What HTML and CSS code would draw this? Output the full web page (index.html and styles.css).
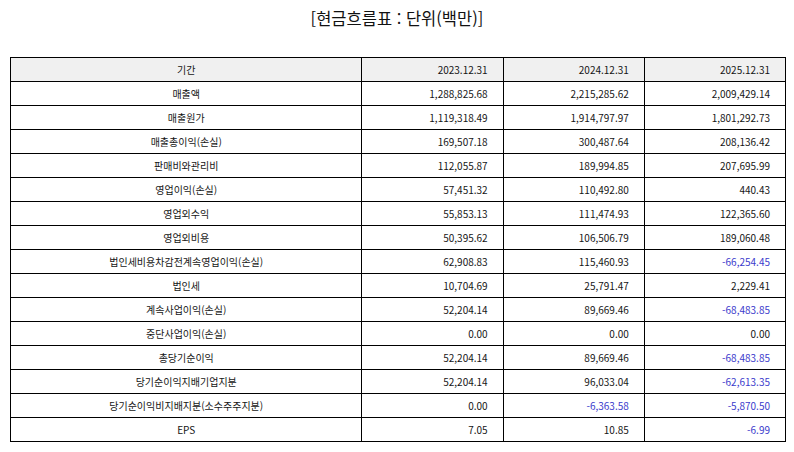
FILE: index.html
```html
<!DOCTYPE html>
<html lang="ko">
<head>
<meta charset="utf-8">
<link rel="stylesheet" href="styles.css">
</head>
<body>
<div class="page">
  <h1 class="title">[현금흐름표 : 단위(백만)]</h1>
  <table class="fin">
    <colgroup>
      <col class="c-label"><col class="c-num"><col class="c-num"><col class="c-num">
    </colgroup>
    <thead>
      <tr><th class="lbl">기간</th><th>2023.12.31</th><th>2024.12.31</th><th>2025.12.31</th></tr>
    </thead>
    <tbody>
      <tr><td class="lbl">매출액</td><td>1,288,825.68</td><td>2,215,285.62</td><td>2,009,429.14</td></tr>
      <tr><td class="lbl">매출원가</td><td>1,119,318.49</td><td>1,914,797.97</td><td>1,801,292.73</td></tr>
      <tr><td class="lbl">매출총이익(손실)</td><td>169,507.18</td><td>300,487.64</td><td>208,136.42</td></tr>
      <tr><td class="lbl">판매비와관리비</td><td>112,055.87</td><td>189,994.85</td><td>207,695.99</td></tr>
      <tr><td class="lbl">영업이익(손실)</td><td>57,451.32</td><td>110,492.80</td><td>440.43</td></tr>
      <tr><td class="lbl">영업외수익</td><td>55,853.13</td><td>111,474.93</td><td>122,365.60</td></tr>
      <tr><td class="lbl">영업외비용</td><td>50,395.62</td><td>106,506.79</td><td>189,060.48</td></tr>
      <tr><td class="lbl">법인세비용차감전계속영업이익(손실)</td><td>62,908.83</td><td>115,460.93</td><td class="neg">-66,254.45</td></tr>
      <tr><td class="lbl">법인세</td><td>10,704.69</td><td>25,791.47</td><td>2,229.41</td></tr>
      <tr><td class="lbl">계속사업이익(손실)</td><td>52,204.14</td><td>89,669.46</td><td class="neg">-68,483.85</td></tr>
      <tr><td class="lbl">중단사업이익(손실)</td><td>0.00</td><td>0.00</td><td>0.00</td></tr>
      <tr><td class="lbl">총당기순이익</td><td>52,204.14</td><td>89,669.46</td><td class="neg">-68,483.85</td></tr>
      <tr><td class="lbl">당기순이익지배기업지분</td><td>52,204.14</td><td>96,033.04</td><td class="neg">-62,613.35</td></tr>
      <tr><td class="lbl">당기순이익비지배지분(소수주주지분)</td><td>0.00</td><td class="neg">-6,363.58</td><td class="neg">-5,870.50</td></tr>
      <tr><td class="lbl">EPS</td><td>7.05</td><td>10.85</td><td class="neg">-6.99</td></tr>
    </tbody>
  </table>
</div>
</body>
</html>
```
FILE: styles.css
```css
html, body {
  margin: 0;
  padding: 0;
  background: #ffffff;
}
.page {
  padding: 7px 10px 0 10px;
  font-family: "Noto Sans CJK KR", "Noto Sans", sans-serif;
  color: #111;
}
.title {
  margin: 0;
  height: 22px;
  line-height: 22px;
  font-size: 16.5px;
  font-weight: normal;
  text-align: center;
  color: #111;
}
.fin {
  margin-top: 28px;
  width: 776px;
  border-collapse: collapse;
  table-layout: fixed;
  font-size: 10px;
}
.c-label { width: 351px; }
.c-num { width: 141px; }
.fin th, .fin td {
  border: 1px solid #000;
  height: 23px;
  padding: 0 15px 0 4px;
  text-align: right;
  font-weight: normal;
  line-height: 14px;
  white-space: nowrap;
  color: #151515;
}
.fin thead th {
  background: #f0f0f0;
}
.fin .lbl {
  text-align: center;
  padding: 0 4px;
}
.fin .neg {
  color: #3b3bcc;
}
```
